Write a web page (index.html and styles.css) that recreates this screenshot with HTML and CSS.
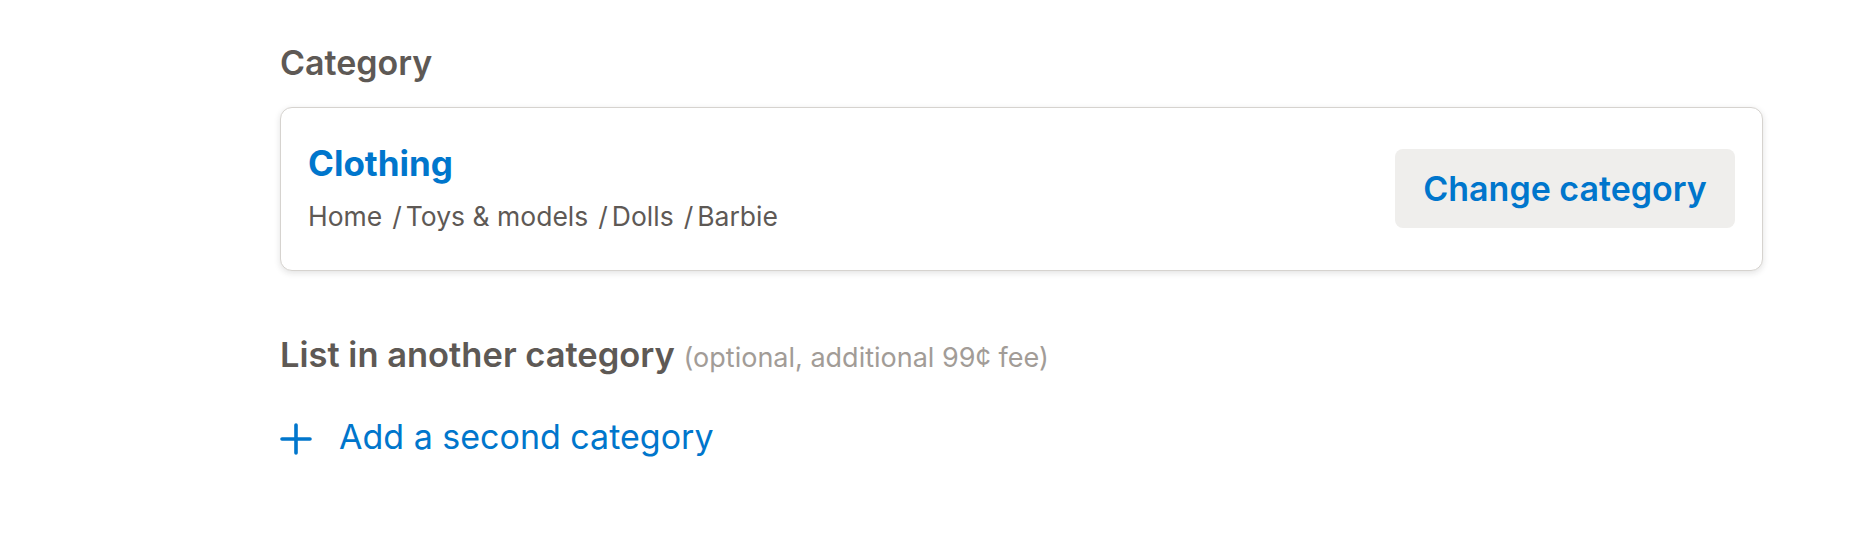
FILE: index.html
```html
<!DOCTYPE html>
<html lang="en">
<head>
<meta charset="utf-8">
<title>Category</title>
<link rel="stylesheet" href="styles.css">
</head>
<body>
<main class="page">
  <h2 class="section-title">Category</h2>
  <div class="card">
    <div class="card-info">
      <div class="cat-name">Clothing</div>
      <div class="crumbs">
        <span>Home</span><span class="sep">/</span><span>Toys &amp; models</span><span class="sep">/</span><span>Dolls</span><span class="sep">/</span><span>Barbie</span>
      </div>
    </div>
    <button class="change-btn" type="button">Change category</button>
  </div>
  <h3 class="sub-title">List in another category <span class="note">(optional, additional 99¢ fee)</span></h3>
  <a class="add-link" href="#">
    <svg class="plus" width="32" height="32" viewBox="0 0 32 32" aria-hidden="true"><path d="M16 2v28M2 16h28" stroke="currentColor" stroke-width="3.6" stroke-linecap="round" fill="none"/></svg>
    <span>Add a second category</span>
  </a>
</main>
</body>
</html>
```
FILE: styles.css
```css
* { box-sizing: border-box; }
html, body { margin: 0; padding: 0; background: #ffffff; }
body {
  font-family: Inter, "Noto Sans", "Liberation Sans", sans-serif;
  color: #5e5955;
}
.page {
  padding: 43px 0 0 280px;
  width: 1763px;
}
.section-title {
  margin: 0 0 23px 0;
  font-size: 34px;
  line-height: 1.2;
  font-weight: 600;
  color: #5e5955;
}
.card {
  display: flex;
  align-items: center;
  justify-content: space-between;
  border: 1px solid #d6d3cf;
  border-radius: 12px;
  padding: 34px 27px 35px 27px;
  box-shadow: 0 2px 6px rgba(34, 34, 34, 0.13);
  background: #fff;
}
.card-info { display: flex; flex-direction: column; gap: 14px; }
.cat-name {
  font-size: 35px;
  line-height: 1.2;
  font-weight: 700;
  color: #0076cc;
}
.crumbs {
  font-size: 26.5px;
  line-height: 1.4;
  color: #5e5955;
  display: flex;
}
.sep { margin: 0 4px 0 10px; }
.change-btn {
  font-family: inherit;
  font-size: 34px;
  font-weight: 600;
  color: #0076cc;
  background: #efeeec;
  border: 0;
  border-radius: 8px;
  height: 79px;
  width: 340px;
  padding: 0;
  cursor: pointer;
}
.sub-title {
  margin: 62px 0 0 0;
  font-size: 34.5px;
  line-height: 1.25;
  font-weight: 600;
  color: #5e5955;
}
.note {
  font-size: 27px;
  font-weight: 400;
  color: #a29c97;
}
.add-link {
  margin-top: 41px;
  display: flex;
  align-items: flex-start;
  gap: 27px;
  font-size: 34px;
  line-height: 1.2;
  color: #0076cc;
  text-decoration: none;
}
.plus { margin-top: 6px; flex: none; }
```
